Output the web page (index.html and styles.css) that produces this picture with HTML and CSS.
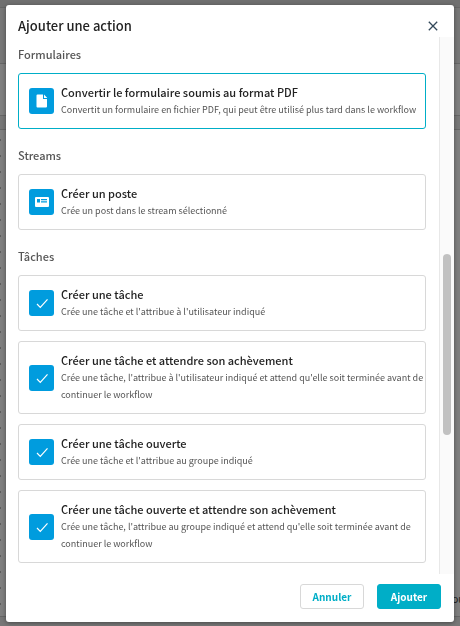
FILE: index.html
```
<!DOCTYPE html>
<html lang="fr">
<head>
    <meta charset="UTF-8">
    <meta name="viewport" content="width=device-width, initial-scale=1.0">
    <title>Ajouter une action</title>
    <link rel="stylesheet" href="styles.css">
</head>
<body>
    <!-- Workflow editor behind the dialog -->
    <div class="editor">
        <div class="topbar"></div>
        <div class="toolbar"></div>
        <div class="tabs"></div>
        <div class="spacer"></div>
        <div class="canvas"><span>ou</span></div>
        <div class="statusbar"></div>
    </div>

    <div class="overlay">
        <form class="modal" role="dialog" aria-labelledby="modal-title">
            <header class="modal-header">
                <h1 id="modal-title">Ajouter une action</h1>
                <button type="button" class="close" aria-label="Fermer">
                    <svg width="10" height="10" viewBox="0 0 10 10"><path d="M.8.800l8.400 8.400M9.200.800l-8.400 8.400" fill="none" stroke="#34495a" stroke-width="1.300"/></svg>
                </button>
            </header>

            <div class="modal-body">
                <div class="actions">
                    <section>
                        <h2>Formulaires</h2>
                        <label class="card">
                            <input type="radio" name="action" value="pdf" checked>
                            <span class="icon">
                                <svg width="25" height="26" viewBox="0 0 25 26"><path d="M8.500 6.500h5.500v4.500h4v7.500a1 1 0 0 1-1 1h-8.500a1 1 0 0 1-1-1v-11a1 1 0 0 1 1-1z" fill="#fff"/><path d="M15 6.500l3.300 3.500h-3.300z" fill="#fff"/></svg>
                            </span>
                            <span class="text">
                                <strong>Convertir le formulaire soumis au format PDF</strong>
                                <span class="desc">Convertit un formulaire en fichier PDF, qui peut être utilisé plus tard dans le workflow</span>
                            </span>
                        </label>
                    </section>

                    <section>
                        <h2>Streams</h2>
                        <label class="card">
                            <input type="radio" name="action" value="post">
                            <span class="icon">
                                <svg width="25" height="26" viewBox="0 0 25 26"><rect x="6" y="8" width="14" height="10" rx="1" fill="#fff"/><path d="M8 10h3v3.500h-3zM12 10h6v1.300h-6zM12 12.200h6v1.300h-6z" fill="#009cde"/></svg>
                            </span>
                            <span class="text">
                                <strong>Créer un poste</strong>
                                <span class="desc">Crée un post dans le stream sélectionné</span>
                            </span>
                        </label>
                    </section>

                    <section>
                        <h2>Tâches</h2>
                        <label class="card">
                            <input type="radio" name="action" value="task">
                            <span class="icon">
                                <svg width="25" height="26" viewBox="0 0 25 26"><path d="M8 14l3.300 3.300 7.200-8" fill="none" stroke="#fff" stroke-width="1.200"/></svg>
                            </span>
                            <span class="text">
                                <strong>Créer une tâche</strong>
                                <span class="desc">Crée une tâche et l'attribue à l'utilisateur indiqué</span>
                            </span>
                        </label>
                        <label class="card">
                            <input type="radio" name="action" value="task-wait">
                            <span class="icon">
                                <svg width="25" height="26" viewBox="0 0 25 26"><path d="M8 14l3.300 3.300 7.200-8" fill="none" stroke="#fff" stroke-width="1.200"/></svg>
                            </span>
                            <span class="text">
                                <strong>Créer une tâche et attendre son achèvement</strong>
                                <span class="desc">Crée une tâche, l'attribue à l'utilisateur indiqué et attend qu'elle soit terminée avant de continuer le workflow</span>
                            </span>
                        </label>
                        <label class="card">
                            <input type="radio" name="action" value="open-task">
                            <span class="icon">
                                <svg width="25" height="26" viewBox="0 0 25 26"><path d="M8 14l3.300 3.300 7.200-8" fill="none" stroke="#fff" stroke-width="1.200"/></svg>
                            </span>
                            <span class="text">
                                <strong>Créer une tâche ouverte</strong>
                                <span class="desc">Crée une tâche et l'attribue au groupe indiqué</span>
                            </span>
                        </label>
                        <label class="card">
                            <input type="radio" name="action" value="open-task-wait">
                            <span class="icon">
                                <svg width="25" height="26" viewBox="0 0 25 26"><path d="M8 14l3.300 3.300 7.200-8" fill="none" stroke="#fff" stroke-width="1.200"/></svg>
                            </span>
                            <span class="text">
                                <strong>Créer une tâche ouverte et attendre son achèvement</strong>
                                <span class="desc">Crée une tâche, l'attribue au groupe indiqué et attend qu'elle soit terminée avant de continuer le workflow</span>
                            </span>
                        </label>
                    </section>
                </div>
                <div class="scrollbar"><div class="thumb"></div></div>
            </div>

            <footer class="modal-footer">
                <button type="button" class="btn">Annuler</button>
                <button type="submit" class="btn primary">Ajouter</button>
            </footer>
        </form>
    </div>
</body>
</html>
```
FILE: styles.css
```
* {
    box-sizing: border-box;
}
body {
    margin: 0;
    font-family: "Noto Sans CJK SC", "Open Sans", sans-serif;
    color: #222;
    background: #7b7b7b;
}
button {
    font-family: inherit;
    cursor: pointer;
}

/* Page behind the dialog */
.editor {
    display: flex;
    flex-direction: column;
    height: 100vh;
}
.topbar {
    height: 8px;
    background: #707070;
    border-bottom: 1px solid #666;
}
.toolbar {
    height: 56px;
    background: #777;
    border-bottom: 1px solid #666;
}
.tabs {
    height: 52px;
    background: #7f7f7f;
    border-bottom: 1px solid #666;
}
.spacer {
    height: 14px;
    background: #777;
    border-bottom: 1px solid #666;
}
.canvas {
    flex: 1;
    display: flex;
    align-items: flex-end;
    justify-content: flex-end;
    padding-bottom: 8px;
    overflow: hidden;
    font-size: 11px;
    line-height: 20px;
    background: #7f7f7f radial-gradient(circle, #5c5c5c 1px, transparent 1px) -8px 2px / 16px 16px;
}
.canvas span {
    margin-right: -5px;
}
.statusbar {
    height: 10px;
    background: #777;
    border-top: 1px solid #666;
}

/* Dialog */
.overlay {
    position: fixed;
    inset: 0;
    display: flex;
    padding: 5px 6px 4px;
}
.modal {
    flex: 1;
    display: flex;
    flex-direction: column;
    min-width: 0;
    background: #fff;
    border-radius: 3px;
    box-shadow: 0 1px 4px rgba(0, 0, 0, 0.4);
}
.modal-header {
    display: flex;
    align-items: center;
    justify-content: space-between;
    height: 32px;
    padding: 9px 12px 0;
}
h1 {
    margin: 0;
    font-size: 13px;
    font-weight: 500;
    line-height: 20px;
}
.close {
    display: flex;
    padding: 4px;
    border: 0;
    background: none;
}
.modal-body {
    flex: 1;
    display: flex;
    min-height: 0;
}
.actions {
    flex: 1;
    min-width: 0;
    overflow: hidden;
    padding: 9px 13px 0 12px;
}
section {
    display: flex;
    flex-direction: column;
    gap: 10px;
    margin-bottom: 18px;
}
h2 {
    margin: 0;
    font-size: 11px;
    font-weight: 500;
    line-height: 17px;
    color: #555;
}
.card {
    display: flex;
    align-items: center;
    gap: 7px;
    padding: 10px 0 10px 10px;
    border: 1px solid #d8d8d8;
    border-radius: 3px;
    cursor: pointer;
}
.card:has(input:checked) {
    border-color: #00aec7;
}
.card input {
    position: absolute;
    opacity: 0;
}
.icon {
    flex: none;
    display: flex;
    border-radius: 3px;
    background: #009cde;
}
.text {
    min-width: 0;
    line-height: 17px;
}
.text strong {
    display: block;
    font-size: 11px;
    font-weight: 500;
}
.desc {
    display: block;
    font-size: 9px;
    color: #555;
}

.scrollbar {
    display: grid;
    grid-template-rows: 217fr 180fr 139fr;
    width: 15px;
    padding: 0 3px;
    background: #fafafa;
    border-left: 1px solid #e8e8e8;
}
.thumb {
    grid-row: 2;
    border-radius: 4px;
    background: #c1c1c1;
}

.modal-footer {
    display: flex;
    justify-content: flex-end;
    gap: 13px;
    padding: 10px 13px 13px;
}
.btn {
    width: 64px;
    height: 25px;
    padding: 0;
    font-size: 10px;
    font-weight: bold;
    color: #00aec7;
    background: #fff;
    border: 1px solid #d8d8d8;
    border-radius: 3px;
}
.primary {
    color: #fff;
    background: #00aec7;
    border-color: #00aec7;
}
```
